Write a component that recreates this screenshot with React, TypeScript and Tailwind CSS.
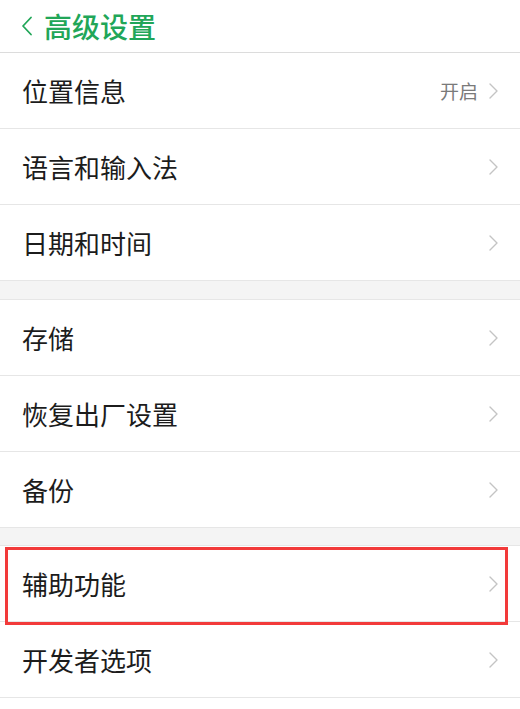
const font = { fontFamily: '"Noto Sans CJK SC", "Noto Sans", sans-serif' }

interface RowProps {
	label: string
	value?: string
	highlight?: boolean
}

const Chevron = () => (
	<svg width="9" height="16" viewBox="0 0 9 16" fill="none">
		<path d="M1 1l7 7-7 7" stroke="#c4c4c4" strokeWidth="1.4" strokeLinecap="round" strokeLinejoin="round" />
	</svg>
)

const Row = ({ label, value, highlight }: RowProps) => (
	<div className="relative flex h-[76px] items-center justify-between border-b border-[#e6e6e6] bg-white pl-[22px] pr-[22px]">
		<span className="text-[26px] leading-none text-[#1c1c1c]">{label}</span>
		<div className="flex items-center gap-[11px]">
			{value && <span className="text-[19px] leading-none text-[#7a7a7a]">{value}</span>}
			<Chevron />
		</div>
		{/* red annotation box */}
		{highlight && (
			<div className="pointer-events-none absolute left-[5px] right-[12px] top-[1px] bottom-[-4px] z-10 border-[3px] border-[#f23a3a]" />
		)}
	</div>
)

const Gap = ({ h }: { h: string }) => <div className={`${h} border-b border-[#e6e6e6] bg-[#f4f4f4]`} />

export default function App() {
	return (
		<div className="h-[709px] w-[520px] overflow-hidden bg-white" style={font}>
			{/* header */}
			<div className="flex h-[53px] items-center border-b border-[#dcdcdc] pl-[21px]">
				<svg width="12" height="20" viewBox="0 0 12 20" fill="none">
					<path d="M10 1.5L2 10l8 8.5" stroke="#21a658" strokeWidth="1.8" strokeLinecap="round" strokeLinejoin="round" />
				</svg>
				<span className="ml-[11px] text-[28px] font-medium leading-none text-[#21a658]">高级设置</span>
			</div>

			<Row label="位置信息" value="开启" />
			<Row label="语言和输入法" />
			<Row label="日期和时间" />
			<Gap h="h-[19px]" />
			<Row label="存储" />
			<Row label="恢复出厂设置" />
			<Row label="备份" />
			<Gap h="h-[18px]" />
			<Row label="辅助功能" highlight />
			<Row label="开发者选项" />
		</div>
	)
}
